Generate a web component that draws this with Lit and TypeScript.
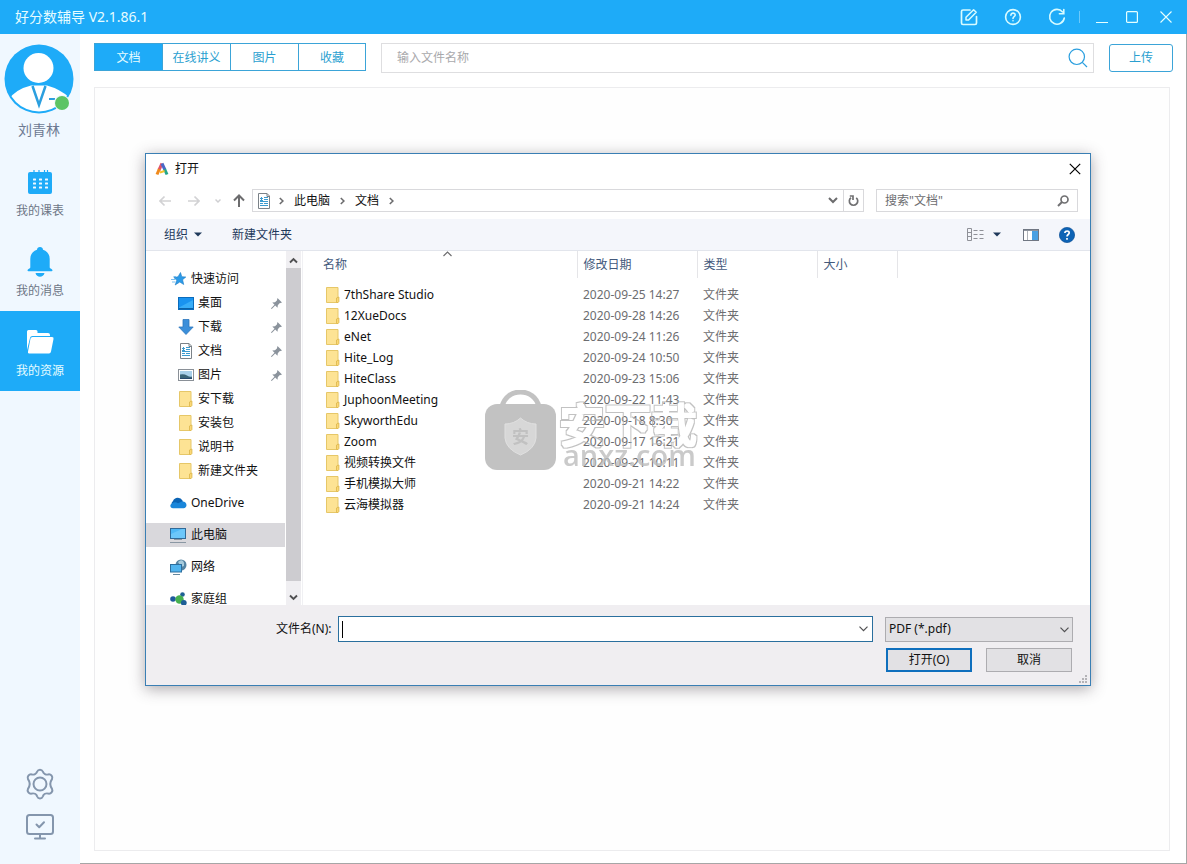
import { LitElement, html, svg, css, nothing } from "lit";
import { customElement } from "lit/decorators.js";
import { classMap } from "lit/directives/class-map.js";

const icons: Record<string, unknown> = {
  edit: html`<svg width="18" height="18" viewBox="0 0 18 18" fill="none" stroke="#d8fbff" stroke-width="1.7" stroke-linejoin="round" stroke-linecap="round"><path d="M10 2H3a1.5 1.5 0 0 0-1.500 1.500V15A1.500 1.500 0 0 0 3 16.500H15A1.500 1.500 0 0 0 16.500 15V8.500"/><path d="M6 12V9.300L13.600 1.700L16.200 4.300L8.600 12Z" stroke-width="1.500"/></svg>`,
  help: html`<svg width="18" height="18" viewBox="0 0 18 18" fill="none" stroke="#d8fbff" stroke-width="1.600" stroke-linecap="round"><circle cx="9" cy="9" r="7.400"/><path d="M6.900 7.200C6.900 4.300 11.300 4.500 11.200 7.100C11.200 8.600 9 8.700 9 10.400"/><path d="M9 12.700V12.800"/></svg>`,
  refresh: html`<svg width="18" height="18" viewBox="0 0 18 18" fill="none" stroke="#d8fbff" stroke-width="1.600" stroke-linecap="round"><path d="M14.600 3.900A7.400 7.400 0 1 0 16.300 10"/><path d="M15.800 1.600V5.700H11.400"/></svg>`,
  min: html`<svg width="12" height="12" viewBox="0 0 12 12" stroke="#e6ffff"><path d="M0 11.500H12"/></svg>`,
  max: html`<svg width="12" height="12" viewBox="0 0 12 12" fill="none" stroke="#e6ffff" stroke-width="1.200"><rect x=".6" y=".6" width="10.800" height="10.800" rx="1"/></svg>`,
  close: html`<svg width="12" height="12" viewBox="0 0 12 12" stroke="#e6ffff" stroke-width="1.100"><path d="M.5.5L11.500 11.500M11.500.5L.5 11.500"/></svg>`,
  lens: html`<svg width="20" height="20" viewBox="0 0 20 20" fill="none" stroke="#2b9fdf" stroke-width="1.200"><circle cx="8.800" cy="8.800" r="7.700"/><path d="M14.300 14.300L19 19"/></svg>`,
  calendar: html`<svg width="24" height="26" viewBox="0 0 24 26"><rect y="3" width="24" height="22" rx="2" fill="#1eabf8"/><path d="M6 1V5M11 1V5M16.500 1V5M19.500 1V5" stroke="#1eabf8" stroke-width="1.200"/><g fill="#f0f8ff">${[5, 11, 17].map((x) => [9.5, 13.5, 17.5].map((y) => svg`<rect x=${x} y=${y} width="3" height="2" rx=".5"/>`))}</g></svg>`,
  bell: html`<svg width="26" height="30" viewBox="0 0 26 30" fill="#1eabf8"><path d="M13 0a3 3 0 0 1 3 2.700C20.500 4 22.700 7.700 22.700 12V20.500C22.700 21.500 25.500 22 25.500 23.200C25.500 24 25 24.300 24 24.300H2C1 24.300.5 24 .5 23.200C.5 22 3.300 21.500 3.300 20.500V12C3.300 7.700 5.500 4 10 2.700A3 3 0 0 1 13 0ZM8.500 26H17.500C16.500 31 9.500 31 8.500 26Z"/></svg>`,
  folderOpen: html`<svg width="28" height="24" viewBox="0 0 28 24" fill="#fff"><path d="M1 1.500A1.500 1.500 0 0 1 2.500 0H10A1.500 1.500 0 0 1 11.500 1.500V3H22A2 2 0 0 1 24 5V6H6.500A2.500 2.500 0 0 0 4 8L1 20Z"/><path d="M6.500 7H26Q28 7 27.500 9L25 21.500Q24.600 23.500 23 23.500H3Q1.500 23.500 2 21.500L4.500 8.500Q5 7 6.500 7Z"/></svg>`,
  gear: html`<svg width="30" height="32" viewBox="0 0 30 32" fill="none" stroke="#8496ad" stroke-width="2" stroke-linejoin="round"><path d="M12.200 3.500C13.200 1 16.800 1 17.800 3.500C18.500 5.800 21 7 23.200 6.400C26 5.800 28.200 8.800 27 11.200C25 14 25 18 27 20.800C28.200 23.200 26 26.200 23.200 25.600C21 25 18.500 26.200 17.800 28.500C16.800 31 13.200 31 12.200 28.500C11.500 26.200 9 25 6.800 25.600C4 26.200 1.800 23.200 3 20.800C5 18 5 14 3 11.200C1.800 8.800 4 5.800 6.800 6.400C9 7 11.500 5.800 12.200 3.500Z"/><circle cx="15" cy="16" r="6.500"/></svg>`,
  monitor: html`<svg width="28" height="26" viewBox="0 0 28 26" fill="none" stroke="#8496ad" stroke-width="2" stroke-linecap="round" stroke-linejoin="round"><rect x="1" y="1" width="26" height="19" rx="2.500"/><path d="M14 20V24M9 24.500H19M10.500 10.500L13.200 13.200L18 8.300"/></svg>`,
  letterA: html`<svg width="14" height="14" viewBox="0 0 14 14" fill="none" stroke-width="3"><path d="M7 1.500L4 8" stroke="#e0556a"/><path d="M4.300 7.200L2 12.500" stroke="#f08a1d"/><path d="M7 1.500L10 8" stroke="#4a68c8"/><path d="M9.600 7.200L12 12.500" stroke="#23a68b"/><path d="M5 10.500L9.500 9" stroke="#f5c22c" stroke-width="2"/></svg>`,
  x: html`<svg width="12" height="12" viewBox="0 0 12 12" stroke="#000" stroke-width="1.200"><path d="M.8.8L11.200 11.200M11.200.8L.8 11.200"/></svg>`,
  back: html`<svg width="12" height="12" viewBox="0 0 12 12" fill="none" stroke="#d2d2d4" stroke-width="1.700"><path d="M12 6H1M5.500 1.500L1 6L5.500 10.500"/></svg>`,
  forward: html`<svg width="12" height="12" viewBox="0 0 12 12" fill="none" stroke="#d2d2d4" stroke-width="1.700"><path d="M0 6H11M6.500 1.500L11 6L6.500 10.500"/></svg>`,
  recent: html`<svg width="6" height="6" viewBox="0 0 6 6" fill="none" stroke="#cfcfd2" stroke-width="1.500"><path d="M.5 1.500L3 4L5.500 1.500"/></svg>`,
  up: html`<svg width="12" height="13" viewBox="0 0 12 13" fill="none" stroke="#6c6c6e" stroke-width="2"><path d="M6 13V1.500M1 6.500L6 1.500L11 6.500"/></svg>`,
  chevR: html`<svg width="5" height="8" viewBox="0 0 5 8" fill="none" stroke="#6c6c6e" stroke-width="1.600"><path d="M.8 1L3.900 4L.8 7"/></svg>`,
  chevD: html`<svg width="10" height="7" viewBox="0 0 10 7" fill="none" stroke="#6c6c6e" stroke-width="2"><path d="M1 1L5 5L9 1"/></svg>`,
  chevThin: html`<svg width="9" height="6" viewBox="0 0 9 6" fill="none" stroke="#505052" stroke-width="1.200"><path d="M.5.7L4.500 4.700L8.500.7"/></svg>`,
  chevUp: html`<svg width="9" height="6" viewBox="0 0 9 6" fill="none" stroke="#6c6c6e" stroke-width="1.200"><path d="M.5 5L4.500 1L8.500 5"/></svg>`,
  scrollUp: html`<svg width="9" height="7" viewBox="0 0 9 7" fill="none" stroke="#505052" stroke-width="1.900"><path d="M1 5.500L4.500 2L8 5.500"/></svg>`,
  scrollDown: html`<svg width="9" height="7" viewBox="0 0 9 7" fill="none" stroke="#505052" stroke-width="1.900"><path d="M1 1.500L4.500 5L8 1.500"/></svg>`,
  reload: html`<svg width="11" height="12" viewBox="0 0 11 12" fill="none" stroke="#707072" stroke-width="1.700"><path d="M8.200 2.800A4.200 4.200 0 1 1 3 2.700"/><path d="M2 1L1.800 1H5V5"/></svg>`,
  lensSmall: html`<svg width="12" height="12" viewBox="0 0 12 12" fill="none" stroke="#707072" stroke-width="1.700"><circle cx="7.500" cy="4.500" r="3.500"/><path d="M5 7L1 11" stroke-width="2"/></svg>`,
  caret: html`<svg width="8" height="5" viewBox="0 0 8 5" fill="#1e395b"><path d="M0 .5H8L4 4.500Z"/></svg>`,
  view: html`<svg width="17" height="13" viewBox="0 0 17 13" fill="none" stroke="#8f9198"><path d="M.5.5H4.500V12.500H.5ZM.5 4.500H4.500M.5 8.500H4.500M6.500 2.500H10.500M12.500 2.500H16.500M6.500 6.500H10.500M12.500 6.500H16.500M6.500 10.500H10.500M12.500 10.500H16.500"/></svg>`,
  pane: html`<svg width="16" height="12" viewBox="0 0 16 12"><rect x=".5" y=".5" width="15" height="11" fill="#fff" stroke="#707783"/><path d="M1 1.500H15" stroke="#8e949e"/><path d="M4.500 2V11" stroke="#b0b4ba"/><rect x="9" y="2" width="6" height="9" fill="#4aa0e2"/></svg>`,
  helpBlue: html`<svg width="16" height="16" viewBox="0 0 16 16" fill="none"><circle cx="8" cy="8" r="7.600" fill="#0d63b5" stroke="#0a4f96" stroke-width=".7"/><path d="M5.900 6C5.900 3.300 10.400 3.400 10.200 6C10.200 7.500 8 7.500 8 9.500M8 11V12.700" stroke="#fff" stroke-width="1.700"/></svg>`,
  doc: html`<svg width="12" height="16" viewBox="0 0 12 16" fill="none"><path d="M.5.500H9L11.500 3V15.500H.5Z" fill="#fff" stroke="#7b8288"/><path d="M9 .5V3.500H11.500" stroke="#7b8288"/><path d="M2 5.500H5M6 4.500H10M2 7.500H5M6 6.500H10M2 8.500H10M3.500 4V8M2 10.500H5M6 10.500H10M2 12.500H10" stroke="#3c9bcf"/></svg>`,
  star: html`<svg width="15" height="14" viewBox="0 0 15 14"><path d="M9.500.5L10.800 4.700L14.800 5L11.600 7.700L12.700 12.500L8.800 10L4.200 13L5.800 8.300L2.800 5.500L7 4.800Z" fill="#2c9be8" stroke="#1f7cc4" stroke-width=".6"/><path d="M0 7.500H4M1 10H4.500M2.500 4.500H5" stroke="#7cc0ee"/></svg>`,
  desktop: html`<svg width="16" height="13" viewBox="0 0 16 13"><rect x=".5" y=".5" width="15" height="12" fill="#1993f0" stroke="#0b6cbc"/><path d="M1 10.500L15 3V12H1Z" fill="#38adf8"/><path d="M1 11.500H15" stroke="#0b62a8"/></svg>`,
  download: html`<svg width="16" height="16" viewBox="0 0 16 16"><path d="M5 .5H11V8H15.200L8 15.500L.8 8H5Z" fill="#3b8fda" stroke="#2c76bd" stroke-width=".8"/></svg>`,
  picture: html`<svg width="16" height="12" viewBox="0 0 16 12"><rect x=".5" y=".5" width="15" height="11" fill="#fff" stroke="#8a9097"/><rect x="2" y="2" width="12" height="8" fill="#a9d0ea"/><path d="M2 5.500Q6 4.500 9 6.500T14 7.500V10H2Z" fill="#3a6478"/><path d="M2 9H14V10H2Z" fill="#27496e"/></svg>`,
  folder: html`<svg width="14" height="16" viewBox="0 0 14 16"><path d="M.5.500H12V15.500H.5Z" fill="#fde394" stroke="#e6c768"/><path d="M10.500 15.500V11L12.900 10V14.500L12 15.500Z" fill="#fbd877" stroke="#dfb94f" stroke-width=".9"/></svg>`,
  cloud: html`<svg width="17" height="12" viewBox="0 0 17 12"><path d="M4.500 11A4 4 0 0 1 3 4A5.300 5.300 0 0 1 12.500 3.500L14 11Z" fill="#0b63b4"/><path d="M3 11.200C0 11.200-.6 7.500 2 6.500C4 5 6 5 8 6.300L12 4.500C14.500 4 16.500 6 16.500 8C16.500 10 15.300 11.200 13.500 11.200Z" fill="#1a86da"/></svg>`,
  pc: html`<svg width="16" height="15" viewBox="0 0 16 15"><rect x=".5" y=".5" width="15" height="10" fill="#4fb8f6" stroke="#316a98"/><path d="M1 10V6L12 1H15V10Z" fill="#6cc7fa"/><path d="M4 11.500H12M0 14.500H16" stroke="#8a97a3"/></svg>`,
  network: html`<svg width="17" height="16" viewBox="0 0 17 16"><circle cx="11" cy="6" r="5.500" fill="#5584a3"/><path d="M8 3Q11 0 13 2T14 7L11 8Z" fill="#a7cbdc"/><rect x=".5" y="5.500" width="11" height="7.500" fill="#51b4ee" stroke="#2d6e9e"/><path d="M3 15.500H10" stroke="#65889f"/></svg>`,
  homegroup: html`<svg width="17" height="14" viewBox="0 0 17 14"><circle cx="3" cy="7" r="2.800" fill="#1e5a9c"/><circle cx="12.500" cy="2.500" r="2.300" fill="#1e6094"/><circle cx="9.500" cy="7.500" r="4.200" fill="#46b04f"/><circle cx="13.800" cy="10.800" r="2.900" fill="#1d5e96"/></svg>`,
  pin: html`<svg width="11" height="11" viewBox="0 0 11 11" fill="#8b939c"><path d="M6.500 0L11 4.500L9.700 5L8.500 5.200L6.800 7.200L6.500 9.700L4.200 7.400L1 10.800L0 11L.3 10L3.500 6.800L1.300 4.500L4 4.200L5.900 2.500Z"/></svg>`,
  grip: html`<svg width="8" height="8" viewBox="0 0 8 8" fill="#b4b3b7"><path d="M6 0h2v2H6zM3 3h2v2H3zM6 3h2v2H6zM0 6h2v2H0zM3 6h2v2H3zM6 6h2v2H6z"/></svg>`,
  avatar: html`<svg width="70" height="70" viewBox="0 0 70 70"><defs><clipPath id="face"><circle cx="35" cy="35" r="32.500"/></clipPath></defs><circle cx="35" cy="35" r="34.500" fill="#1eabf8"/><g clip-path="url(#face)"><path d="M4 56Q12 45 27 41.500H43Q56 45 66 54V70H4Z" fill="#fff"/></g><path d="M28.500 42L35 61L41.500 42" fill="#fff" stroke="#2b9fdf" stroke-width="2.500"/><circle cx="34.500" cy="24" r="15" fill="#fff"/><path d="M45 55H51" stroke="#2b9fdf" stroke-width="2"/><circle cx="58" cy="59" r="8" fill="#f0f8ff"/><circle cx="58" cy="59" r="7" fill="#5cc465"/></svg>`,
};

const sections = [
  { label: "我的课表", icon: "calendar", active: false },
  { label: "我的消息", icon: "bell", active: false },
  { label: "我的资源", icon: "folderOpen", active: true },
];

interface Place {
  label: string;
  icon: string;
  pinned?: boolean;
  selected?: boolean;
  children?: Place[];
}

const places: Place[] = [
  {
    label: "快速访问",
    icon: "star",
    children: [
      { label: "桌面", icon: "desktop", pinned: true },
      { label: "下载", icon: "download", pinned: true },
      { label: "文档", icon: "doc", pinned: true },
      { label: "图片", icon: "picture", pinned: true },
      { label: "安下载", icon: "folder" },
      { label: "安装包", icon: "folder" },
      { label: "说明书", icon: "folder" },
      { label: "新建文件夹", icon: "folder" },
    ],
  },
  { label: "OneDrive", icon: "cloud" },
  { label: "此电脑", icon: "pc", selected: true },
  { label: "网络", icon: "network" },
  { label: "家庭组", icon: "homegroup" },
];

const files = [
  ["7thShare Studio", "2020-09-25 14:27"],
  ["12XueDocs", "2020-09-28 14:26"],
  ["eNet", "2020-09-24 11:26"],
  ["Hite_Log", "2020-09-24 10:50"],
  ["HiteClass", "2020-09-23 15:06"],
  ["JuphoonMeeting", "2020-09-22 11:43"],
  ["SkyworthEdu", "2020-09-18 8:30"],
  ["Zoom", "2020-09-17 16:21"],
  ["视频转换文件", "2020-09-21 10:11"],
  ["手机模拟大师", "2020-09-21 14:22"],
  ["云海模拟器", "2020-09-21 14:24"],
];

const base = css`
  * { box-sizing: border-box; }
  svg { display: block; flex: none; }
  button, input, select {
    font: inherit;
    color: inherit;
    border: 0;
    padding: 0;
    margin: 0;
    background: none;
    border-radius: 0;
    outline: none;
  }
  a { color: inherit; text-decoration: none; }
  ul { list-style: none; margin: 0; padding: 0; }
`;

@customElement("open-dialog")
export class OpenDialog extends LitElement {
  static styles = [
    base,
    css`
      :host {
        display: flex;
        flex-direction: column;
        border: 1px solid #3a7fb4;
        background: #fff;
        box-shadow: 0 3px 14px rgba(60, 50, 60, 0.42);
        font-size: 12px;
        line-height: 16px;
        color: #111;
      }
      .title { display: flex; align-items: center; height: 29px; padding: 0 9px; gap: 6px; }
      .title button { margin-left: auto; }
      .address { display: flex; align-items: center; padding: 6px 12px 7px 13px; height: 36px; }
      .arrows { display: flex; align-items: center; gap: 17px; width: 93px; flex: none; }
      .arrows .near { margin: 0 -5px 0 -2px; }
      .path { flex: 1; display: flex; align-items: center; height: 23px; border: 1px solid #d9d9dc; padding-left: 5px; }
      .crumb { padding: 0 10px; }
      .path .chev { margin-left: 9px; }
      .down { margin-left: auto; padding: 0 5px; }
      .reload { display: flex; align-items: center; padding: 0 4px; height: 21px; border-left: 1px solid #d9d9dc; }
      .find { display: flex; align-items: center; width: 202px; height: 23px; border: 1px solid #d9d9dc; margin-left: 12px; padding: 0 8px; }
      .find input { flex: 1; min-width: 0; }
      .find input::placeholder { color: #6d6d70; opacity: 1; }
      .tools { display: flex; align-items: center; height: 32px; padding: 0 15px 0 18px; background: #f4f6fb; border-bottom: 1px solid #e2e5ec; color: #1e395b; }
      .tools button { display: flex; align-items: center; gap: 6px; margin-right: 30px; }
      .tools .view { margin: 0 22px 0 auto; gap: 9px; }
      .tools .pane { margin-right: 20px; }
      .tools .about { margin: 0; }
      .body { display: flex; height: 354px; overflow: hidden; }
      .tree { flex: none; width: 139px; padding-top: 16px; display: flex; flex-direction: column; gap: 8px; }
      .place { display: flex; align-items: center; height: 24px; padding: 0 3px 0 24px; gap: 5px; white-space: nowrap; }
      .place .pic { width: 16px; display: flex; justify-content: center; flex: none; }
      .place.nested { padding-left: 32px; gap: 4px; }
      .place.selected { background: #d9d8dc; }
      .pin { margin-left: auto; }
      .scroll { display: flex; flex-direction: column; align-items: center; justify-content: space-between; width: 15px; margin-left: 1px; background: #f0eff2; flex: none; padding: 6px 0 4px; }
      .thumb { flex: 1; width: 15px; margin: 4px 0 13px; background: #cdccd0; }
      .list { flex: 1; position: relative; margin-left: 1px; border-left: 1px solid #f0f0f3; }
      .sort { position: absolute; left: 140px; top: 0; }
      table { border-collapse: collapse; table-layout: fixed; width: 100%; }
      th { font-weight: 400; text-align: left; height: 27px; padding: 0 6px; color: #43597c; border-right: 1px solid #e5e5e8; }
      th:last-child { border: 0; }
      td { height: 21px; padding: 0 6px; color: #6d6d70; white-space: nowrap; }
      th:first-child { padding-left: 20px; }
      td:first-child { padding-left: 23px; color: #111; }
      thead::after { content: ""; display: block; height: 6px; }
      .file { display: flex; align-items: center; gap: 4px; }
      .c1 { width: 274px; }
      .c2 { width: 120px; }
      .c3 { width: 80px; }
      .foot { display: flex; flex-direction: column; gap: 6px; background: #f0eef1; padding: 11px 17px 13px 130px; position: relative; }
      .row { display: flex; align-items: center; }
      .row label { margin-right: 6px; flex: none; }
      .name { flex: 1; height: 26px; display: flex; align-items: center; background: #fff; border: 1px solid #2a6f9e; padding: 0 4px 0 3px; }
      .name input { flex: 1; min-width: 0; }
      .cursor { width: 1px; height: 17px; background: #000; }
      .kind { position: relative; width: 188px; height: 25px; margin-left: 12px; flex: none; }
      .kind select { appearance: none; width: 100%; height: 100%; border: 1px solid #adacb0; background: #e2e1e4; padding-left: 3px; }
      .kind svg { position: absolute; right: 4px; top: 10px; pointer-events: none; }
      .actions { display: flex; justify-content: flex-end; gap: 14px; padding-right: 1px; }
      .actions button { width: 86px; height: 24px; background: #e2e1e4; border: 1px solid #adacb0; }
      .actions .go { border: 2px solid #0f6fbd; }
      .grip { position: absolute; right: 3px; bottom: 2px; }
      .mark { position: absolute; left: 182px; top: 139px; display: flex; gap: 3px; pointer-events: none; opacity: 0.78; }
      .words { display: flex; flex-direction: column; color: #bcbcbc; padding-top: 10px; }
      .big { font-size: 46px; line-height: 48px; font-weight: 500; color: #000; filter: url(#outline); }
      .site { font: 600 29px/28px "Open Sans", "Noto Sans", sans-serif; padding-left: 4px; margin-top: -7px; }
      .shield { font-size: 17px; fill: #b0b0b0; font-weight: 700; }
    `,
  ];

  private place(p: Place, nested = false): unknown {
    return html`<li>
      <a href="#" class=${classMap({ place: true, nested, selected: !!p.selected })}>
        <span class="pic">${icons[p.icon]}</span>${p.label}
        ${p.pinned ? html`<span class="pin">${icons.pin}</span>` : nothing}
      </a>
      ${p.children ? html`<ul>${p.children.map((c) => this.place(c, true))}</ul>` : nothing}
    </li>`;
  }

  render() {
    return html`
      <div class="title">${icons.letterA}<span>打开</span><button aria-label="关闭">${icons.x}</button></div>
      <div class="address">
        <div class="arrows">
          <button aria-label="后退">${icons.back}</button>
          <button aria-label="前进">${icons.forward}</button>
          <button class="near" aria-label="最近">${icons.recent}</button>
          <button aria-label="向上">${icons.up}</button>
        </div>
        <div class="path">
          ${icons.doc}<span class="chev">${icons.chevR}</span>
          <a href="#" class="crumb">此电脑</a>${icons.chevR}
          <a href="#" class="crumb">文档</a>${icons.chevR}
          <button class="down" aria-label="历史">${icons.chevD}</button>
          <button class="reload" aria-label="刷新">${icons.reload}</button>
        </div>
        <div class="find"><input aria-label="搜索" placeholder='搜索"文档"' />${icons.lensSmall}</div>
      </div>
      <div class="tools">
        <button>组织 ${icons.caret}</button>
        <button>新建文件夹</button>
        <button class="view" aria-label="视图">${icons.view}${icons.caret}</button>
        <button class="pane" aria-label="预览窗格">${icons.pane}</button>
        <button class="about" aria-label="帮助">${icons.helpBlue}</button>
      </div>
      <div class="body">
        <ul class="tree">${places.map((p) => this.place(p))}</ul>
        <div class="scroll">${icons.scrollUp}<div class="thumb"></div>${icons.scrollDown}</div>
        <div class="list">
          <table>
            <colgroup><col class="c1" /><col class="c2" /><col class="c2" /><col class="c3" /><col /></colgroup>
            <thead><tr><th>名称</th><th>修改日期</th><th>类型</th><th>大小</th><th></th></tr></thead>
            <tbody>
              ${files.map(([name, date]) => html`<tr>
                <td><span class="file">${icons.folder}${name}</span></td>
                <td>${date}</td><td>文件夹</td><td></td><td></td>
              </tr>`)}
            </tbody>
          </table>
          <span class="sort">${icons.chevUp}</span>
          <div class="mark">
            <svg width="71" height="80" viewBox="0 0 71 80">
              <defs>
                <filter id="outline" x="-5%" y="-10%" width="110%" height="120%" color-interpolation-filters="sRGB">
                  <feMorphology in="SourceAlpha" operator="dilate" radius="2" result="outer" />
                  <feMorphology in="SourceAlpha" operator="dilate" radius="1" result="inner" />
                  <feFlood flood-color="#b2b2b2" />
                  <feComposite in2="outer" operator="in" />
                  <feComposite in2="inner" operator="out" />
                </filter>
              </defs>
              <path d="M17 17C21-3 50-3 54 17" fill="none" stroke="#b2b2b2" stroke-width="5" />
              <rect y="14" width="71" height="66" rx="12" fill="#b2b2b2" />
              <path d="M35.500 28Q42 34 51 34V48Q50 59 35.500 65Q21 59 20 48V34Q29 34 35.500 28Z" fill="#cdcdcd" stroke="#d8d8d8" />
              <text class="shield" x="35.500" y="53" text-anchor="middle">安</text>
            </svg>
            <div class="words"><span class="big">安下载</span><span class="site">anxz.com</span></div>
          </div>
        </div>
      </div>
      <div class="foot">
        <div class="row">
          <label for="filename">文件名(N):</label>
          <div class="name"><span class="cursor"></span><input id="filename" />${icons.chevThin}</div>
          <div class="kind"><select aria-label="文件类型"><option>PDF (*.pdf)</option></select>${icons.chevThin}</div>
        </div>
        <div class="actions"><button class="go">打开(O)</button><button>取消</button></div>
        <span class="grip">${icons.grip}</span>
      </div>
    `;
  }
}

@customElement("app-root")
export class AppRoot extends LitElement {
  static styles = [
    base,
    css`
      :host {
        display: flex;
        flex-direction: column;
        position: relative;
        min-height: 100vh;
        background: #fff;
        font: 12px/16px "Noto Sans", "Noto Sans CJK SC", sans-serif;
        color: #2b9fd0;
      }
      .bar { display: flex; align-items: center; height: 34px; padding: 0 15px; background: #1eabf8; color: #e6fcff; font-size: 14px; line-height: 20px; }
      .bar nav { margin-left: auto; display: flex; align-items: center; }
      .bar .tool { margin-right: 26px; }
      .bar .tool.last { margin-right: 13px; }
      .split { width: 1px; height: 12px; background: #6cc9fb; margin-right: 16px; }
      .bar .win { margin-right: 18px; }
      .bar .win.wide { margin-right: 22px; }
      .bar .win.end { margin-right: 0; }
      .main { flex: 1; display: flex; }
      .side { width: 80px; flex: none; background: #f0f8ff; display: flex; flex-direction: column; align-items: center; padding: 10px 0 24px; }
      .who { display: flex; flex-direction: column; align-items: center; gap: 6px; height: 107px; padding-right: 2px; font-size: 14px; line-height: 20px; color: #6d7a92; }
      .side .section { width: 80px; height: 80px; display: flex; flex-direction: column; align-items: center; color: #6d7686; }
      .section .glyph { height: 52px; padding-top: 9px; display: flex; align-items: center; }
      .side .section.active { background: #1eabf8; color: #e6fcff; }
      .bottom { margin-top: auto; display: flex; flex-direction: column; align-items: center; gap: 14px; }
      .content { flex: 1; min-width: 0; display: flex; flex-direction: column; gap: 14px; padding: 9px 13px 12px 14px; border: solid #a6a6a6; border-width: 0 1px 1px 0; }
      .top { display: flex; align-items: flex-start; }
      .tabs { display: flex; border: 1px solid #3ba4d8; height: 28px; flex: none; }
      .tabs button { width: 68px; padding: 1px 0 0; border-right: 1px solid #3ba4d8; }
      .tabs button:last-child { width: 66px; border: 0; }
      .tabs .on { background: #1eabf8; color: #e6fcff; }
      .search { flex: 1; display: flex; align-items: center; height: 30px; margin: 0 15px; border: 1px solid #dedee0; padding: 0 5px 0 15px; }
      .search input { flex: 1; min-width: 0; }
      .search input::placeholder { color: #a9a9ac; opacity: 1; }
      .top .upload { width: 64px; height: 28px; margin-top: 1px; border: 1px solid #3ba4d8; border-radius: 3px; flex: none; }
      .panel { flex: 1; border: 1px solid #ececee; margin-right: 3px; background: #fefefe; }
      open-dialog { position: absolute; left: 145px; right: 96px; top: 153px; }
    `,
  ];

  render() {
    return html`
      <header class="bar">
        <span>好分数辅导 V2.1.86.1</span>
        <nav>
          <button class="tool" aria-label="反馈">${icons.edit}</button>
          <button class="tool" aria-label="帮助">${icons.help}</button>
          <button class="tool last" aria-label="刷新">${icons.refresh}</button>
          <span class="split"></span>
          <button class="win" aria-label="最小化">${icons.min}</button>
          <button class="win wide" aria-label="最大化">${icons.max}</button>
          <button class="win end" aria-label="关闭">${icons.close}</button>
        </nav>
      </header>
      <div class="main">
        <aside class="side">
          <div class="who">${icons.avatar}<span>刘青林</span></div>
          ${sections.map((s) => html`<button class=${classMap({ section: true, active: s.active })}>
            <span class="glyph">${icons[s.icon]}</span><span>${s.label}</span>
          </button>`)}
          <div class="bottom">
            <button aria-label="设置">${icons.gear}</button>
            <button aria-label="检测">${icons.monitor}</button>
          </div>
        </aside>
        <main class="content">
          <div class="top">
            <div class="tabs"><button class="on">文档</button><button>在线讲义</button><button>图片</button><button>收藏</button></div>
            <div class="search"><input aria-label="文件名称" placeholder="输入文件名称" />${icons.lens}</div>
            <button class="upload">上传</button>
          </div>
          <section class="panel"></section>
        </main>
      </div>
      <open-dialog role="dialog" aria-label="打开"></open-dialog>
    `;
  }
}
